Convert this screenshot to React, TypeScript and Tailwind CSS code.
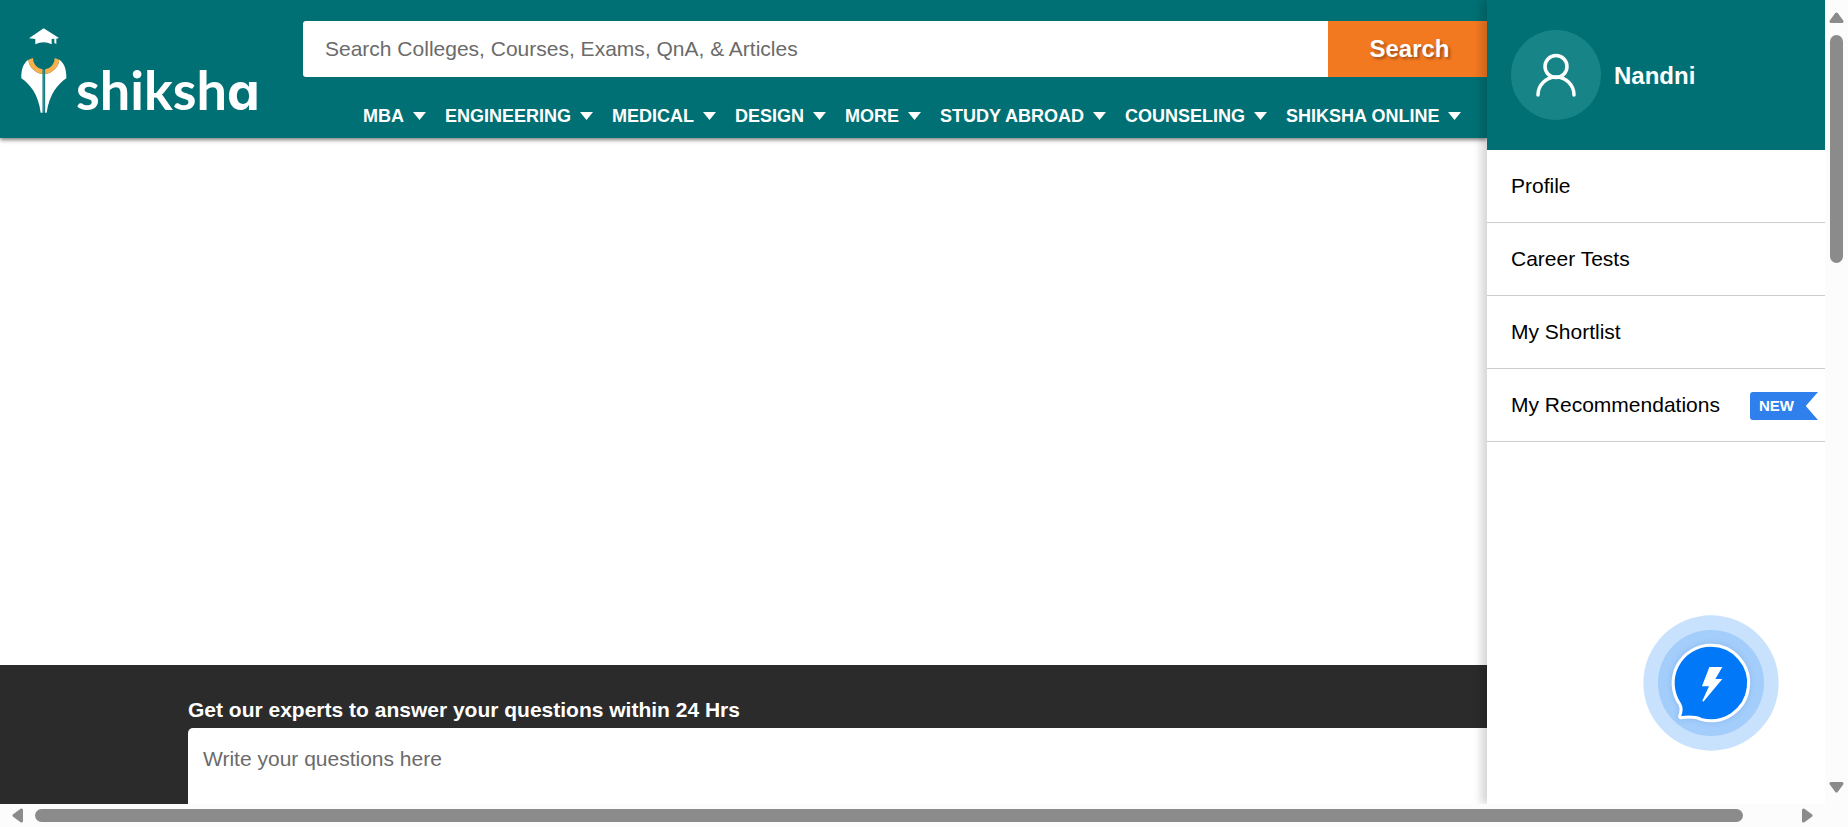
const courses = [
  'MBA',
  'ENGINEERING',
  'MEDICAL',
  'DESIGN',
  'MORE',
  'STUDY ABROAD',
  'COUNSELING',
  'SHIKSHA ONLINE',
];

function Logo() {
  return (
    <a href="#" aria-label="shiksha" className="flex shrink-0 items-end gap-[9px] text-white">
      <svg width="46" height="86" viewBox="62 84 138 258" aria-hidden="true">
        <path
          fill="#fff"
          d="M130 85 L86 115 L105 117 V133 Q130 121 154 133 V117 L162 116 V129 L168 132 V116 L176 114 Z"
        />
        <path
          fill="#fff"
          d="M84 179 C70 188 62 208 63 235 C88 252 114 282 121 338 H126.500 V222 A48 48 0 0 1 84 179 Z M177 179 C191 188 199 208 198 235 C173 252 147 282 139 338 H134.500 V222 A48 48 0 0 0 177 179 Z"
        />
        <path
          fill="#f9b04b"
          d="M84 179 L98 174 A33 33 0 0 0 126.500 208 V222 A48 48 0 0 1 84 179 Z M177 179 L163 174 A33 33 0 0 1 134.500 208 V222 A48 48 0 0 0 177 179 Z"
        />
        <path stroke="#fff" strokeOpacity="0.45" strokeWidth="2" d="M130.500 210 V338" />
      </svg>
      <span className="font-[Lato,sans-serif] text-[54px] leading-[44px] font-bold">
        shiksh
        <span className="font-[Inter,sans-serif] text-[52px] [font-feature-settings:'cv11']">a</span>
      </span>
    </a>
  );
}

function Header() {
  return (
    <header className="relative z-10 flex h-[138px] shrink-0 bg-[#007074] shadow-[0_2px_4px_rgba(0,0,0,0.5)]">
      <div className="flex w-[303px] shrink-0 items-start pt-7 pl-[21px]">
        <Logo />
      </div>
      <div className="min-w-0 flex-1 pt-[21px]">
        <form className="flex h-14" onSubmit={(e) => e.preventDefault()}>
          <input
            type="text"
            aria-label="Search"
            placeholder="Search Colleges, Courses, Exams, QnA, & Articles"
            className="min-w-0 flex-1 rounded-l-[3px] bg-white px-[22px] text-[21px] text-black outline-none placeholder:text-[#6b6b6b]"
          />
          <button
            type="submit"
            className="w-[159px] bg-[#f37921] pl-1 text-2xl font-bold text-white [text-shadow:2px_2px_3px_rgba(0,0,0,0.35)]"
          >
            Search
          </button>
        </form>
        <nav aria-label="Courses" className="mt-[27px] flex gap-[19px] pl-[60px]">
          {courses.map((name) => (
            <button key={name} type="button" className="flex items-center gap-[9px] text-lg leading-6 font-bold whitespace-nowrap text-white">
              {name}
              <svg width="13" height="8" viewBox="0 0 13 8" aria-hidden="true">
                <path d="M0 0H13L6.500 8Z" fill="#fff" />
              </svg>
            </button>
          ))}
        </nav>
      </div>
    </header>
  );
}

function NewBadge() {
  return (
    <span className="mt-0.5 flex h-7 w-[68px] items-center rounded-l-[3px] bg-[#2f80ed] pl-[9px] text-[15px] font-bold text-white [clip-path:polygon(0_0,100%_0,82%_50%,100%_100%,0_100%)]">
      NEW
    </span>
  );
}

function ChatButton() {
  return (
    <button type="button" aria-label="Chat" className="absolute right-[46px] bottom-[53px]">
      <svg width="136" height="136" viewBox="0 0 408 408" aria-hidden="true">
        <defs>
          <filter id="soft" x="-20%" y="-20%" width="140%" height="140%">
            <feDropShadow dx="0" dy="0" stdDeviation="8" floodColor="#2a6db5" floodOpacity="0.25" />
          </filter>
        </defs>
        <circle cx="204" cy="204" r="203" fill="#c8e1fd" />
        <circle cx="204" cy="204" r="159" fill="#a3cdfb" />
        <path
          filter="url(#soft)"
          d="M204 91 A113 113 0 1 1 174 313 Q153 303 113 308 Q110 308 110 304 Q118 282 111 269 A113 113 0 0 1 204 91 Z"
          fill="#0078f8"
          stroke="#fff"
          strokeWidth="9"
        />
        <path d="M199 156 H238 L217 192 H238 L181 260 L178 257 L198 214 H177 Z" fill="#fff" />
      </svg>
    </button>
  );
}

const menu = ['Profile', 'Career Tests', 'My Shortlist', 'My Recommendations'];

function Drawer() {
  return (
    <aside className="relative z-20 w-[338px] shrink-0 bg-white shadow-[-6px_0_8px_rgba(0,0,0,0.16)]">
      <div className="flex h-[150px] items-center gap-[13px] bg-[#007074] pl-6 text-white">
        <span className="flex size-[90px] items-center justify-center rounded-full bg-[#178588]">
          <svg width="40" height="44" viewBox="0 0 40 44" fill="none" stroke="#fff" strokeWidth="3.500" strokeLinecap="round" aria-hidden="true">
            <circle cx="20" cy="13.500" r="11" />
            <path d="M2 42A18 18 0 0 1 38 42" />
          </svg>
        </span>
        <span className="pt-0.5 text-2xl font-bold">Nandni</span>
      </div>
      <ul>
        {menu.map((item) => (
          <li key={item} className="border-b border-[#ccc]">
            <a href="#" className="flex h-[72px] items-center justify-between pr-[7px] pl-6 text-[21px] whitespace-nowrap text-black">
              {item}
              {item === 'My Recommendations' && <NewBadge />}
            </a>
          </li>
        ))}
      </ul>
      <ChatButton />
    </aside>
  );
}

function Arrow({ className }: { className: string }) {
  return (
    <svg width="15" height="11" viewBox="0 0 15 11" className={className} aria-hidden="true">
      <path d="M7.500 2L13 9.500H2Z" fill="#8b8b8b" stroke="#8b8b8b" strokeWidth="3" strokeLinejoin="round" />
    </svg>
  );
}

export default function App() {
  return (
    <div className="grid h-screen grid-cols-[minmax(0,1fr)_23px] grid-rows-[minmax(0,1fr)_23px] overflow-hidden bg-[#fcfcfc] font-['Liberation_Sans',Arial,sans-serif]">
      <div className="flex overflow-hidden bg-white">
        <div className="flex min-w-0 flex-1 flex-col">
          <Header />
          <main className="flex-1" />
          <footer className="shrink-0 bg-[#2b2b2b] pt-[33px] pl-[188px]">
            <label htmlFor="question" className="mb-1.5 block text-[21px] leading-6 font-bold text-white">
              Get our experts to answer your questions within 24 Hrs
            </label>
            <textarea
              id="question"
              placeholder="Write your questions here"
              className="block h-[76px] w-full resize-none rounded-tl-[5px] bg-white px-[15px] pt-[19px] text-[21px] leading-6 text-black outline-none placeholder:text-[#6b6b6b]"
            />
          </footer>
        </div>
        <Drawer />
      </div>
      <div className="flex flex-col items-center justify-between pt-3 pb-[11px]">
        <Arrow className="shrink-0" />
        <div className="flex w-full flex-1 justify-center py-3">
          <div className="h-[31%] w-[13px] rounded-full bg-[#8b8b8b]" />
        </div>
        <Arrow className="shrink-0 rotate-180" />
      </div>
      <div className="flex items-center justify-between px-[10px]">
        <Arrow className="shrink-0 -rotate-90" />
        <div className="flex flex-1 pr-1 pl-[10px]">
          <div className="h-[13px] w-[97%] rounded-full bg-[#8b8b8b]" />
        </div>
        <Arrow className="shrink-0 rotate-90" />
      </div>
    </div>
  );
}
